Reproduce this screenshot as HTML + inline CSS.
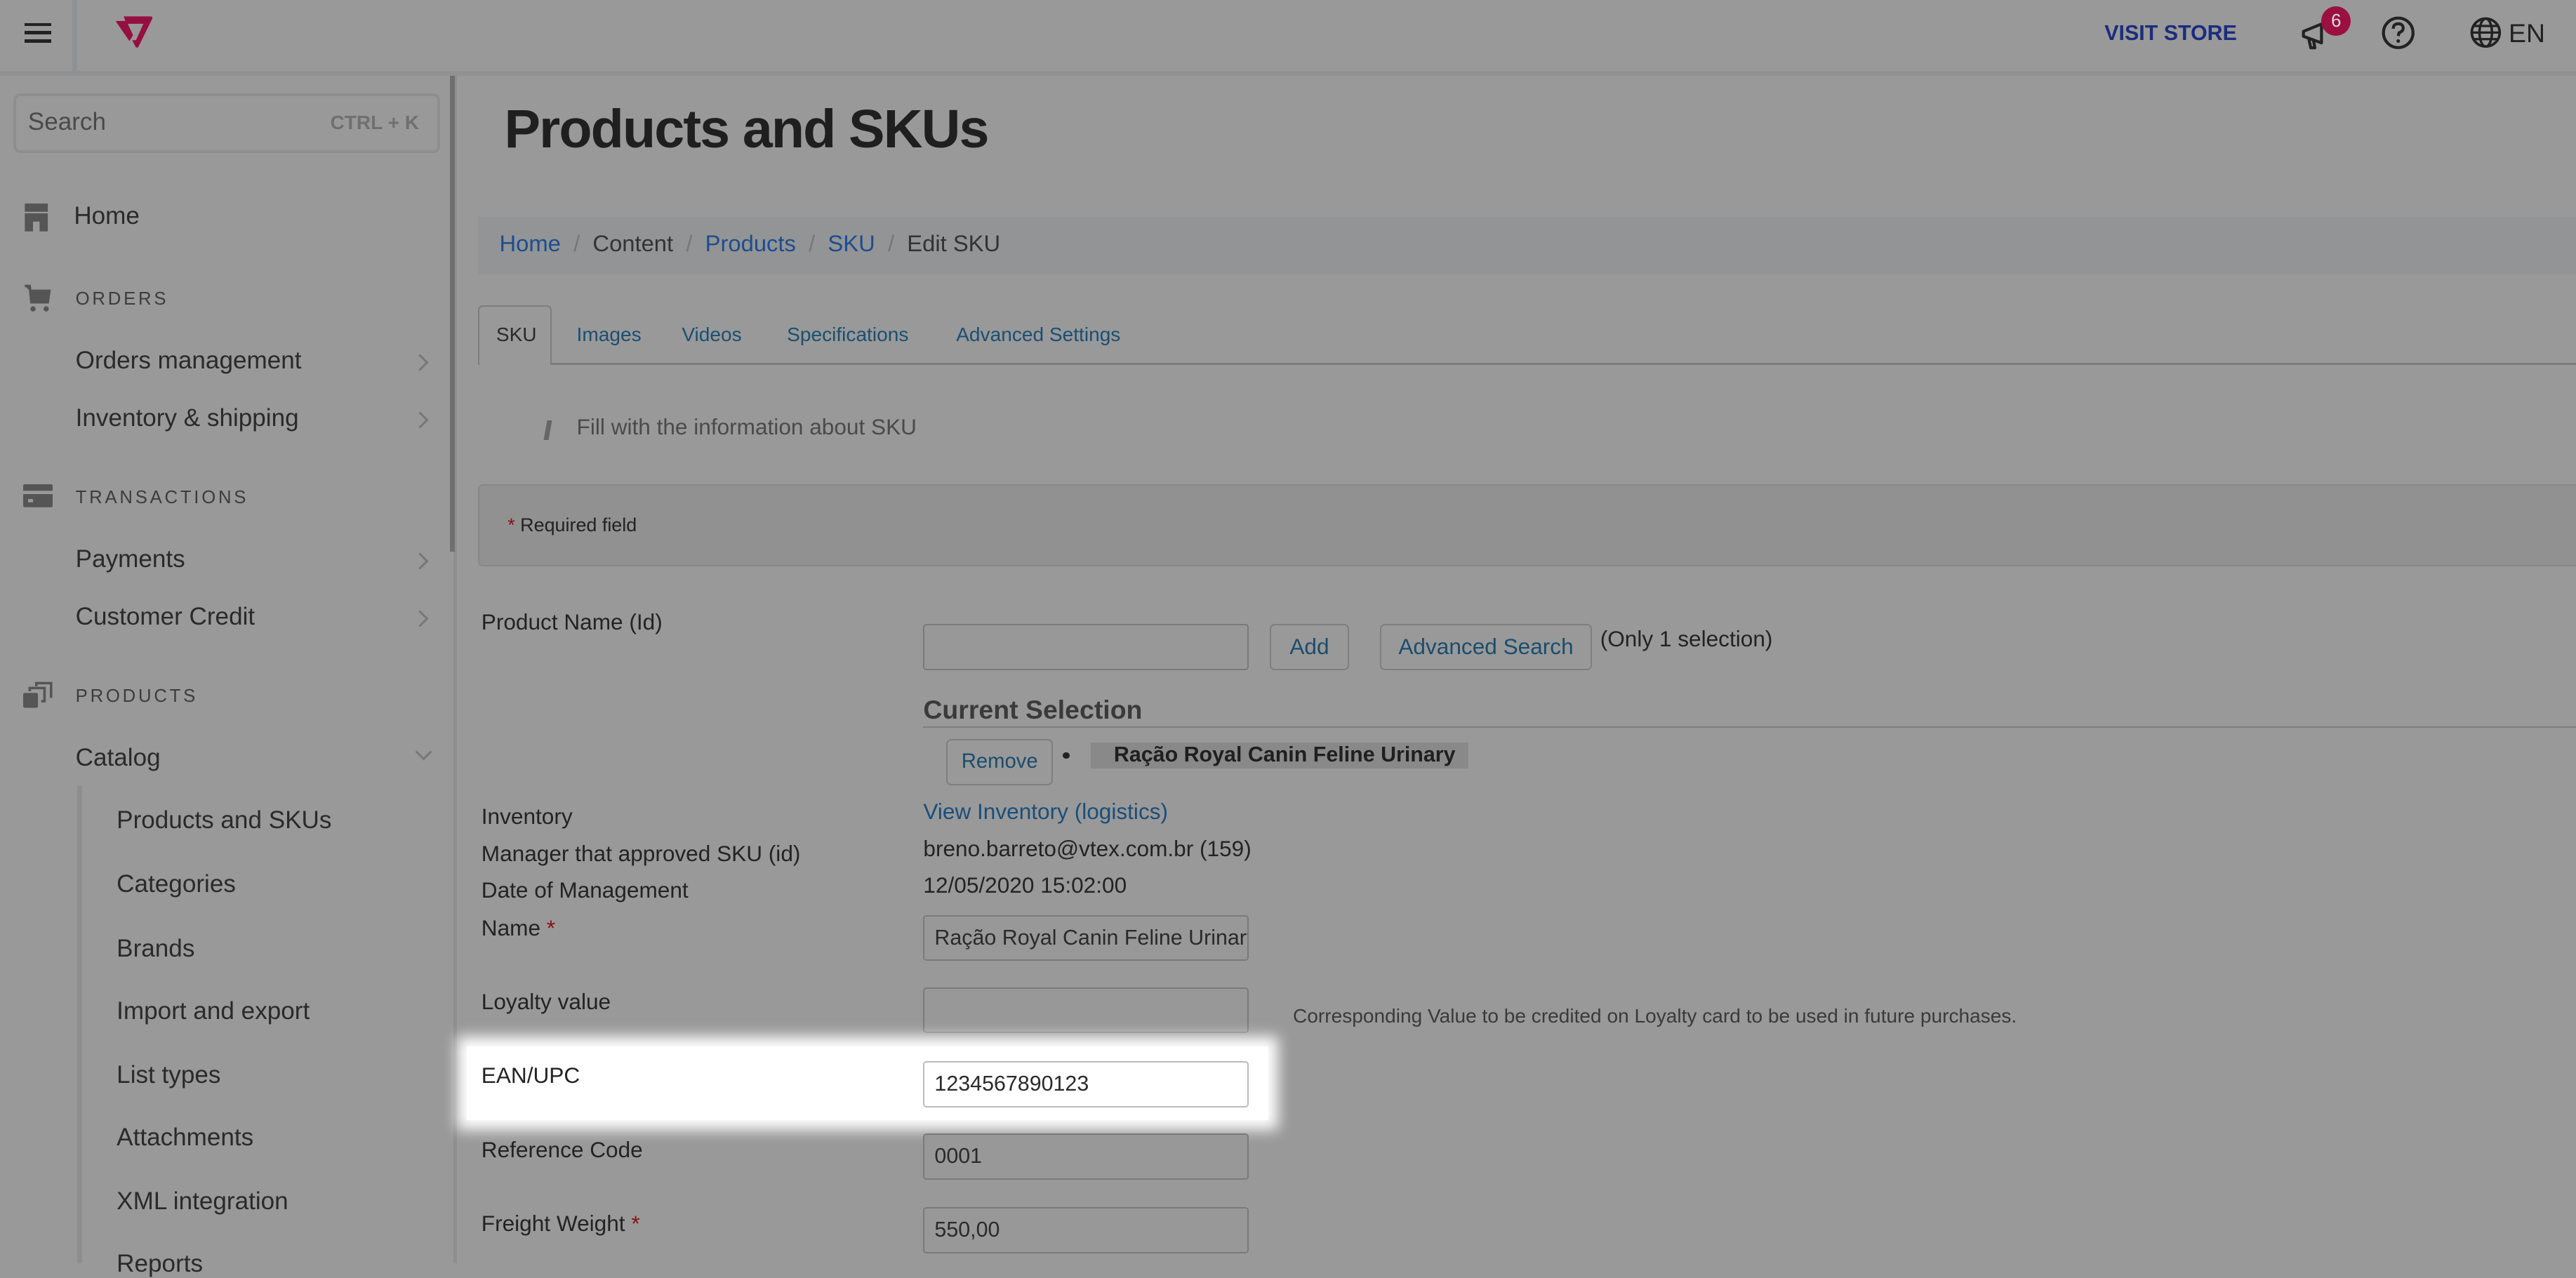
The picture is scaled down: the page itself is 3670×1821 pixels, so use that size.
<!DOCTYPE html>
<html><head><meta charset="utf-8">
<style>
html,body{margin:0;padding:0;}
body{width:1568px;height:769px;zoom:2.34056;background:#999;overflow:hidden;position:relative;font-family:"Liberation Sans",sans-serif;color:#232323;}
.a{position:absolute;white-space:nowrap;}
.hdr{position:absolute;left:0;top:0;width:1568px;height:43px;border-bottom:3px solid #909192;}
.side{font-size:15px;color:#2a2a2a;}
.cap{font-size:11px;letter-spacing:1.6px;color:#3c3c3c;}
.chev{position:absolute;width:6px;height:6px;border-right:1.3px solid #777;border-top:1.3px solid #777;transform:rotate(45deg);}
.lbl{font-size:13.5px;color:#232323;}
.inp{position:absolute;left:562px;border:1px solid #7a7a7a;border-radius:2px;background:#989898;font-size:13px;line-height:26px;padding-left:6px;box-sizing:border-box;width:198px;height:28px;color:#2a2a2a;white-space:nowrap;overflow:hidden;}
.btn{position:absolute;border:1px solid #7f7f7f;border-radius:3px;font-size:13.5px;color:#1a4d6e;text-align:center;box-sizing:border-box;}
.lnk{color:#1d4d8f;}
.tab{font-size:12px;color:#1a4f72;}
</style></head><body>
<div class="hdr"></div>
<div class="a" style="left:44px;top:0;width:3px;height:43px;background:#909192"></div>
<div class="a" style="left:15px;top:14px;width:16px;height:2px;background:#222"></div>
<div class="a" style="left:15px;top:19px;width:16px;height:2px;background:#222"></div>
<div class="a" style="left:15px;top:24px;width:16px;height:2px;background:#222"></div>
<svg class="a" style="left:69px;top:9px" width="26" height="21" viewBox="0 0 26 21"><path d="M6.5 1 H23 Q24.5 1.2 23.8 2.6 L15.5 19.5 Q14.6 20.6 13.7 19.5 L11.7 15.5 L14 15.5 L18.5 5.5 L9 5.5 L12.2 12.5 L10 16 L2 4.5 Q1.7 3.8 2.5 3.8 L7.5 3.8 Z" fill="#950f40"/></svg>

<div class="a" style="left:1281px;top:13px;font-size:13px;font-weight:bold;color:#1b2d7e;">VISIT STORE</div>
<svg class="a" style="left:1400px;top:11px" width="22" height="22" viewBox="0 0 22 22"><path d="M2 8 L13 3.5 L13 15 L2 11 Z M5 11.5 L6.5 18 L9 18 L8 13" fill="none" stroke="#222" stroke-width="1.8" stroke-linejoin="round"/></svg>
<div class="a" style="left:1413px;top:4px;width:18px;height:18px;border-radius:9px;background:#9a1040;color:#ddd;font-size:11px;text-align:center;line-height:18px;">6</div>
<svg class="a" style="left:1449px;top:9px" width="22" height="22" viewBox="0 0 22 22"><circle cx="11" cy="11" r="9" fill="none" stroke="#222" stroke-width="1.8"/><path d="M8 8.5 Q8 5.5 11 5.5 Q14 5.5 14 8.3 Q14 10 11.5 11 L11 13" fill="none" stroke="#222" stroke-width="1.8"/><circle cx="11" cy="16" r="1.1" fill="#222"/></svg>
<svg class="a" style="left:1503px;top:10px" width="20" height="20" viewBox="0 0 20 20"><circle cx="10" cy="10" r="8.5" fill="none" stroke="#222" stroke-width="1.6"/><ellipse cx="10" cy="10" rx="3.8" ry="8.5" fill="none" stroke="#222" stroke-width="1.5"/><path d="M1.5 10 H18.5 M3 6 H17 M3 14 H17" stroke="#222" stroke-width="1.4"/></svg>
<div class="a" style="left:1527px;top:11px;font-size:16px;color:#222;">EN</div>

<!-- sidebar -->
<div class="a" style="left:276px;top:46px;width:2px;height:723px;background:#8e8e8e"></div>
<div class="a" style="left:274px;top:46px;width:3px;height:290px;background:#6f6f6f"></div>
<div class="a" style="left:8px;top:57px;width:260px;height:36px;border:2px solid #8e8e8e;border-radius:4px;box-sizing:border-box;"></div>
<div class="a" style="left:17px;top:66px;font-size:15px;color:#4a4a4a;">Search</div>
<div class="a" style="left:201px;top:68px;font-size:12px;font-weight:bold;color:#707070;">CTRL + K</div>

<svg class="a" style="left:14px;top:124px" width="16" height="18" viewBox="0 0 16 18"><rect x="1" y="0" width="14" height="5" fill="#555"/><path d="M1 6 H15 V17 H10 V11 H6 V17 H1 Z" fill="#555"/></svg>
<div class="a side" style="left:45px;top:123px;">Home</div>
<svg class="a" style="left:14px;top:173px" width="18" height="18" viewBox="0 0 18 18"><path d="M1 1 H4 L5 11 H15 L16 4 H4" fill="#555" stroke="#555" stroke-width="1.5"/><circle cx="6" cy="15" r="1.6" fill="#555"/><circle cx="14" cy="15" r="1.6" fill="#555"/></svg>
<div class="a cap" style="left:46px;top:176px;">ORDERS</div>
<div class="a side" style="left:46px;top:211px;">Orders management</div><div class="chev" style="left:252px;top:217px"></div>
<div class="a side" style="left:46px;top:246px;">Inventory &amp; shipping</div><div class="chev" style="left:252px;top:252px"></div>
<svg class="a" style="left:14px;top:295px" width="18" height="14" viewBox="0 0 18 14"><rect x="0" y="0" width="18" height="14" rx="1" fill="#555"/><rect x="0" y="4" width="18" height="2" fill="#999"/><rect x="3" y="9" width="3" height="2" fill="#999"/></svg>
<div class="a cap" style="left:46px;top:297px;">TRANSACTIONS</div>
<div class="a side" style="left:46px;top:332px;">Payments</div><div class="chev" style="left:252px;top:338px"></div>
<div class="a side" style="left:46px;top:367px;">Customer Credit</div><div class="chev" style="left:252px;top:373px"></div>
<svg class="a" style="left:14px;top:415px" width="18" height="16" viewBox="0 0 18 16"><rect x="0" y="7" width="9" height="9" rx="1" fill="#555"/><path d="M4 6 V4 H13 V12 H11 M8 3 V1 H17 V10" fill="none" stroke="#555" stroke-width="1.5"/></svg>
<div class="a cap" style="left:46px;top:418px;">PRODUCTS</div>
<div class="a side" style="left:46px;top:453px;">Catalog</div>
<div class="a" style="left:254px;top:454px;width:6px;height:6px;border-right:1.3px solid #777;border-bottom:1.3px solid #777;transform:rotate(45deg);"></div>
<div class="a" style="left:47px;top:478px;width:3px;height:291px;background:#8e8e8e"></div>
<div class="a side" style="left:71px;top:491px;">Products and SKUs</div>
<div class="a side" style="left:71px;top:530px;">Categories</div>
<div class="a side" style="left:71px;top:569px;">Brands</div>
<div class="a side" style="left:71px;top:607px;">Import and export</div>
<div class="a side" style="left:71px;top:646px;">List types</div>
<div class="a side" style="left:71px;top:684px;">Attachments</div>
<div class="a side" style="left:71px;top:723px;">XML integration</div>
<div class="a side" style="left:71px;top:761px;">Reports</div>

<!-- main -->
<div class="a" style="left:307px;top:60px;font-size:33px;font-weight:bold;color:#1f1f1f;letter-spacing:-0.8px;">Products and SKUs</div>
<div class="a" style="left:291px;top:132px;width:1277px;height:35px;background:#939495;"></div>
<div class="a" style="left:304px;top:140px;font-size:14px;color:#333;"><span class="lnk">Home</span> <span style="color:#777">&nbsp;/&nbsp;</span> Content <span style="color:#777">&nbsp;/&nbsp;</span> <span class="lnk">Products</span> <span style="color:#777">&nbsp;/&nbsp;</span> <span class="lnk">SKU</span> <span style="color:#777">&nbsp;/&nbsp;</span> Edit SKU</div>

<div class="a" style="left:336px;top:221px;width:1232px;height:1px;background:#7d7d7d"></div>
<div class="a" style="left:291px;top:186px;width:45px;height:36px;border:1px solid #7d7d7d;border-bottom:none;border-radius:3px 3px 0 0;box-sizing:border-box;background:#999"></div>
<div class="a tab" style="left:302px;top:197px;color:#2a2a2a">SKU</div>
<div class="a tab" style="left:351px;top:197px;">Images</div>
<div class="a tab" style="left:415px;top:197px;">Videos</div>
<div class="a tab" style="left:479px;top:197px;">Specifications</div>
<div class="a tab" style="left:582px;top:197px;">Advanced Settings</div>

<div class="a" style="left:332px;top:256px;width:3px;height:12px;background:#666;transform:skewX(-10deg)"></div>
<div class="a" style="left:351px;top:252px;font-size:13.5px;color:#4a4a4a;">Fill with the information about SKU</div>

<div class="a" style="left:291px;top:295px;width:1290px;height:50px;background:#919191;border:1px solid #878787;border-radius:3px;box-sizing:border-box"></div>
<div class="a" style="left:309px;top:313px;font-size:11.5px;color:#222;"><span style="color:#8a1010">*</span> Required field</div>

<div class="a lbl" style="left:293px;top:371px;">Product Name (Id)</div>
<div class="inp" style="top:380px;"></div>
<div class="btn" style="left:773px;top:380px;width:48px;height:28px;line-height:26px;">Add</div>
<div class="btn" style="left:840px;top:380px;width:129px;height:28px;line-height:26px;">Advanced Search</div>
<div class="a lbl" style="left:974px;top:381px;">(Only 1 selection)</div>
<div class="a" style="left:562px;top:423px;font-size:16px;font-weight:bold;color:#3a3a3a;">Current Selection</div>
<div class="a" style="left:562px;top:442px;width:1006px;height:1px;background:#7d7d7d"></div>
<div class="btn" style="left:576px;top:450px;width:65px;height:28px;line-height:26px;font-size:12.5px;">Remove</div>
<div class="a" style="left:647px;top:458px;width:4px;height:4px;border-radius:2px;background:#222"></div>
<div class="a" style="left:664px;top:452px;width:230px;height:16px;background:#898989"></div>
<div class="a" style="left:678px;top:452px;font-size:13px;font-weight:bold;color:#1f1f1f;">Ração Royal Canin Feline Urinary</div>

<div class="a lbl" style="left:293px;top:489px;">Inventory</div>
<div class="a lbl" style="left:562px;top:486px;color:#1a4e78;">View Inventory (logistics)</div>
<div class="a lbl" style="left:293px;top:512px;">Manager that approved SKU (id)</div>
<div class="a lbl" style="left:562px;top:509px;">breno.barreto@vtex.com.br (159)</div>
<div class="a lbl" style="left:293px;top:534px;">Date of Management</div>
<div class="a lbl" style="left:562px;top:531px;">12/05/2020 15:02:00</div>
<div class="a lbl" style="left:293px;top:557px;">Name <span style="color:#8a1010">*</span></div>
<div class="inp" style="top:557px;">Ração Royal Canin Feline Urinary</div>
<div class="a lbl" style="left:293px;top:602px;">Loyalty value</div>
<div class="inp" style="top:601px;"></div>
<div class="a" style="left:787px;top:612px;font-size:12px;color:#3a3a3a;">Corresponding Value to be credited on Loyalty card to be used in future purchases.</div>

<div class="a" style="left:284px;top:637px;width:488px;height:45px;background:#fff;box-shadow:0 0 8px 6px #fff;"></div>
<div class="a lbl" style="left:293px;top:647px;">EAN/UPC</div>
<div class="inp" style="top:646px;background:#fff;border-color:#bbb;">1234567890123</div>

<div class="a lbl" style="left:293px;top:692px;">Reference Code</div>
<div class="inp" style="top:690px;">0001</div>
<div class="a lbl" style="left:293px;top:737px;">Freight Weight <span style="color:#8a1010">*</span></div>
<div class="inp" style="top:735px;">550,00</div>
</body></html>
